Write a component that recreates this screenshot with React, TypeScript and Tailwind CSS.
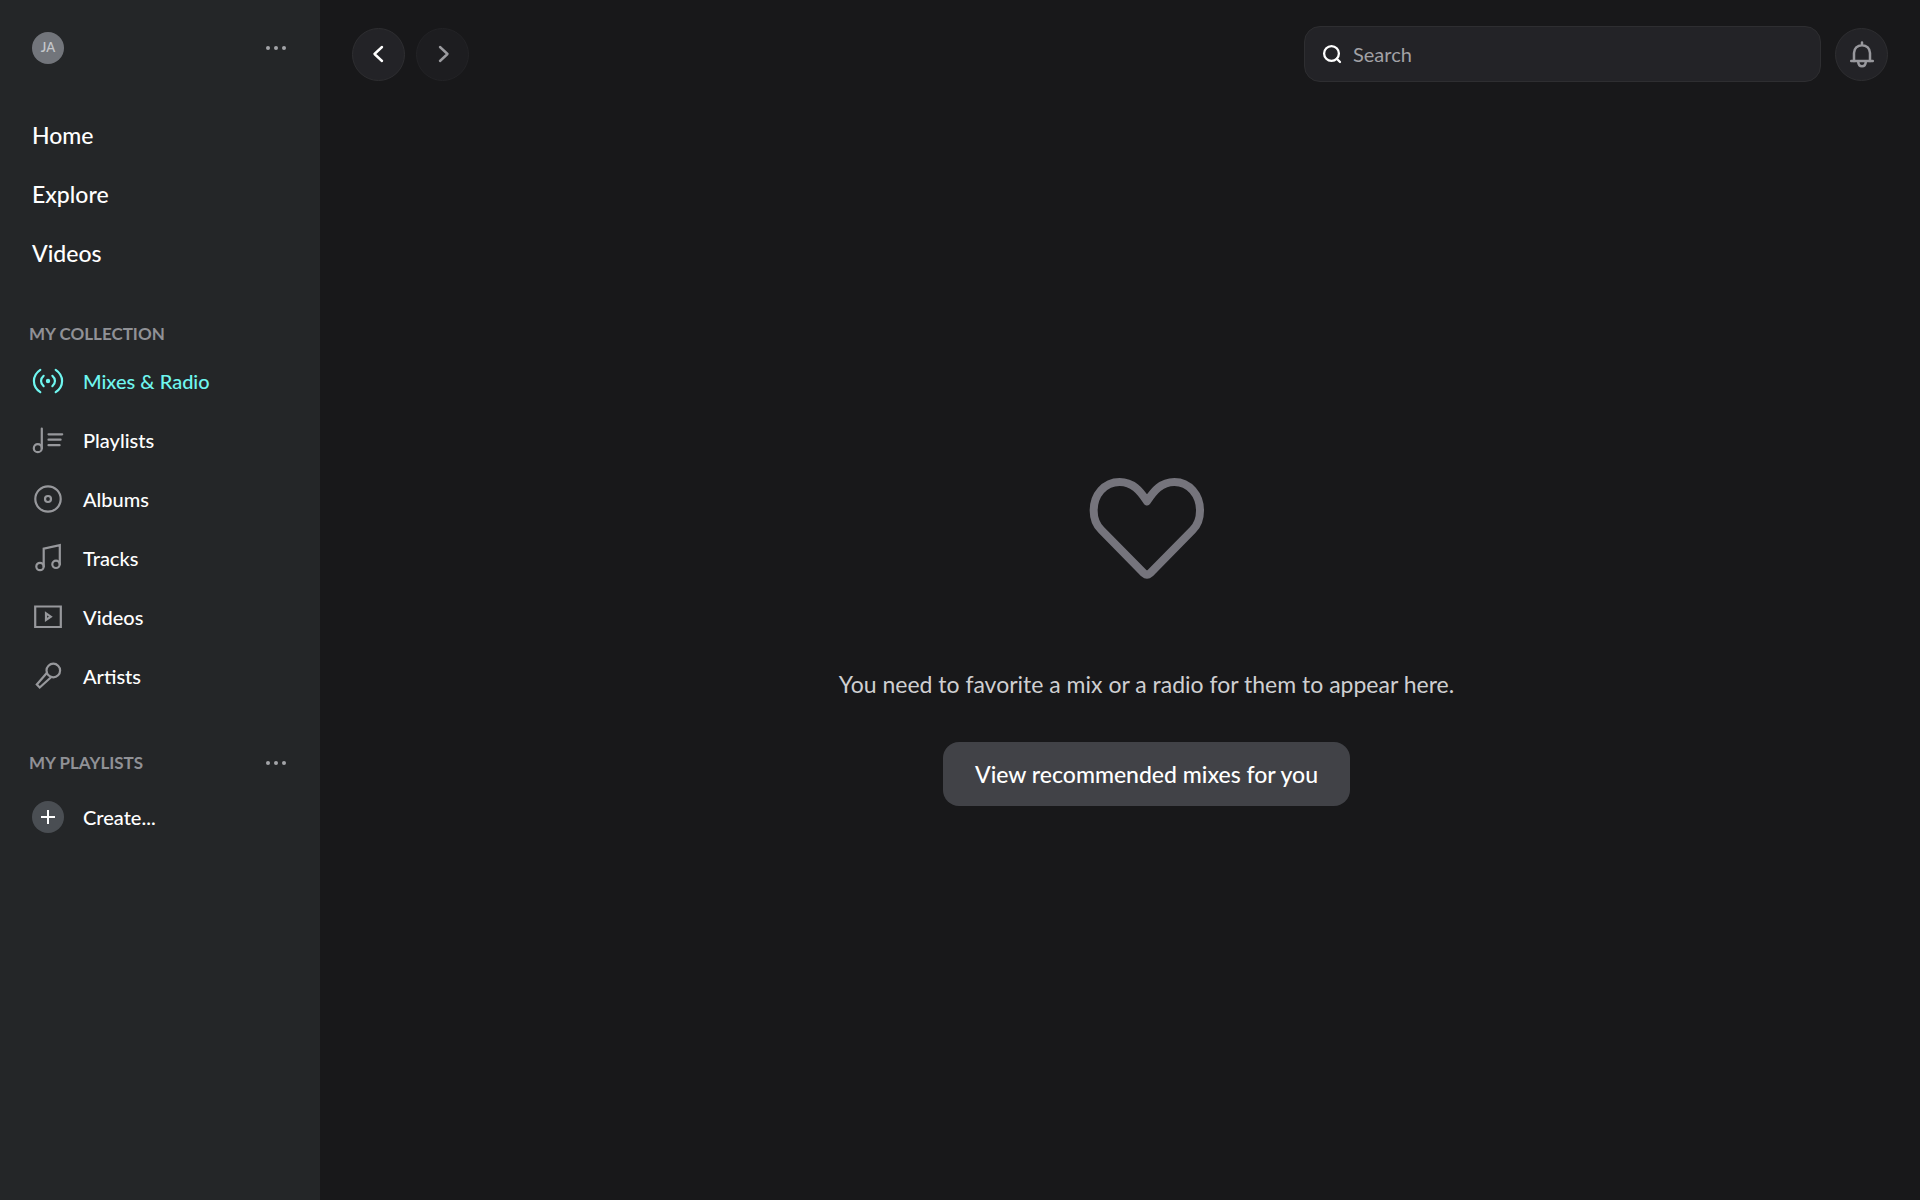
import type { ReactNode } from 'react';
import { clsx } from 'clsx';

const MAIN_NAV = [
  { href: '#home', label: 'Home' },
  { href: '#explore', label: 'Explore' },
  { href: '#videos', label: 'Videos' },
];

const COLLECTION: { href: string; label: string; icon: ReactNode }[] = [
  {
    href: '#mixes',
    label: 'Mixes & Radio',
    icon: (
      <>
        <path d="M8.3 4.8C-.2 10.5 -.2 21.5 8.3 27.2M23.7 4.8C32.2 10.5 32.2 21.5 23.7 27.2" />
        <path d="M11.6 10.8C8.2 13.5 8.2 18.5 11.6 21.2M20.4 10.8C23.8 13.5 23.8 18.5 20.4 21.2" />
        <circle cx="16" cy="16" r="2.2" fill="currentColor" stroke="none" />
      </>
    ),
  },
  {
    href: '#playlists',
    label: 'Playlists',
    icon: (
      <>
        <circle cx="5.8" cy="24.2" r="4" />
        <path d="M9.8 4.5V24.2M16.5 10.3H30.2M16.5 15.7H28.6M16.5 21.2H27.6" />
      </>
    ),
  },
  {
    href: '#albums',
    label: 'Albums',
    icon: (
      <>
        <circle cx="16" cy="16" r="12.7" />
        <circle cx="16" cy="16" r="3" />
      </>
    ),
  },
  {
    href: '#tracks',
    label: 'Tracks',
    icon: (
      <>
        <circle cx="8" cy="24.5" r="3.7" />
        <circle cx="24" cy="22.3" r="3.7" />
        <path d="M11.7 24.5V6.6L27.8 3.2V22.3" strokeLinejoin="miter" />
      </>
    ),
  },
  {
    href: '#my-videos',
    label: 'Videos',
    icon: (
      <>
        <path d="M3.2 5.5H28.8V26H3.2Z" strokeLinejoin="miter" />
        <path d="M14 12.4V19L18.8 15.7Z" strokeLinejoin="miter" />
      </>
    ),
  },
  {
    href: '#artists',
    label: 'Artists',
    icon: (
      <>
        <circle cx="21.3" cy="10.5" r="6.8" />
        <path d="M15 12.7L4.8 24.5L7.7 27.5L19.3 17" strokeLinejoin="miter" />
      </>
    ),
  },
];

function LineIcon({ children }: { children: ReactNode }) {
  return (
    <svg
      viewBox="0 0 32 32"
      className="h-8 w-8 shrink-0"
      fill="none"
      stroke="currentColor"
      strokeWidth="2.2"
      strokeLinecap="round"
      strokeLinejoin="round"
      aria-hidden
    >
      {children}
    </svg>
  );
}

function MoreButton({ label }: { label: string }) {
  return (
    <button type="button" aria-label={label} className="mr-0.5 flex h-8 items-center gap-1 text-[#a3a4a8]">
      <span className="h-1 w-1 rounded-full bg-current" />
      <span className="h-1 w-1 rounded-full bg-current" />
      <span className="h-1 w-1 rounded-full bg-current" />
    </button>
  );
}

function RoundButton({ label, dim = false, children }: { label: string; dim?: boolean; children: ReactNode }) {
  return (
    <button
      type="button"
      aria-label={label}
      disabled={dim}
      className={clsx(
        'flex h-[53px] w-[53px] shrink-0 items-center justify-center rounded-full border',
        dim ? 'border-[#232326] bg-[#1d1d20] text-[#9b9b9f]' : 'border-[#2e2e31] bg-[#232327] text-white'
      )}
    >
      {children}
    </button>
  );
}

function Chevron({ d }: { d: string }) {
  return (
    <svg
      viewBox="0 0 24 24"
      className="h-6 w-6"
      fill="none"
      stroke="currentColor"
      strokeWidth="2.4"
      strokeLinecap="round"
      strokeLinejoin="round"
      aria-hidden
    >
      <path d={d} />
    </svg>
  );
}

function Sidebar() {
  return (
    <aside className="w-80 shrink-0 bg-[#242628] px-8 pt-8">
      <div className="flex items-center justify-between">
        <button
          type="button"
          aria-label="Account"
          className="flex h-8 w-8 items-center justify-center rounded-full bg-[#72757b] text-[13px] font-semibold text-[#c4c6ca]"
        >
          JA
        </button>
        <MoreButton label="Account options" />
      </div>

      <nav aria-label="Main" className="mt-[42px]">
        {MAIN_NAV.map(({ href, label }) => (
          <a key={label} href={href} className="flex h-[59px] items-center text-[23px] font-medium text-white">
            {label}
          </a>
        ))}
      </nav>

      <h2 className="-ml-[3px] mt-[37px] text-[17px] leading-7 font-bold text-[#909196]">MY COLLECTION</h2>
      <nav aria-label="My collection" className="mt-[3px]">
        {COLLECTION.map(({ href, label, icon }, i) => (
          <a key={href} href={href} className="flex h-[59px] items-center gap-[19px]">
            <span className={i === 0 ? 'text-[#6ff6f0]' : 'text-[#97989c]'}>
              <LineIcon>{icon}</LineIcon>
            </span>
            <span className={clsx('text-xl font-medium', i === 0 ? 'text-[#6ff6f0]' : 'text-white')}>{label}</span>
          </a>
        ))}
      </nav>

      <div className="mt-[42px] flex items-center justify-between">
        <h2 className="-ml-[3px] text-[17px] leading-7 font-bold text-[#909196]">MY PLAYLISTS</h2>
        <MoreButton label="Playlist options" />
      </div>
      <button type="button" className="mt-[22px] flex items-center gap-[19px] text-xl font-medium text-white">
        <span className="flex h-8 w-8 items-center justify-center rounded-full bg-[#4a4e53]">
          <svg viewBox="0 0 14 14" className="h-3.5 w-3.5" stroke="currentColor" strokeWidth="2" aria-hidden>
            <path d="M7 0V14M0 7H14" />
          </svg>
        </span>
        Create...
      </button>
    </aside>
  );
}

function Header() {
  return (
    <header className="flex items-center justify-between px-8 pt-[26px]">
      <div className="flex gap-[11px]">
        <RoundButton label="Back">
          <Chevron d="M15 5L7.5 12L15 19" />
        </RoundButton>
        <RoundButton label="Forward" dim>
          <Chevron d="M9 5L16.5 12L9 19" />
        </RoundButton>
      </div>
      <div className="flex items-center gap-3.5">
        <label className="flex h-14 w-[517px] items-center gap-[11px] rounded-2xl border border-[#2e2e31] bg-[#232327] px-[17px]">
          <svg
            viewBox="0 0 20 20"
            className="h-5 w-5 shrink-0 text-white"
            fill="none"
            stroke="currentColor"
            strokeWidth="2.3"
            strokeLinecap="round"
            aria-hidden
          >
            <circle cx="9.5" cy="9.5" r="7.4" />
            <path d="M14.8 14.8L18 18" />
          </svg>
          <input
            type="search"
            aria-label="Search"
            placeholder="Search"
            className="w-full bg-transparent text-xl text-white outline-none placeholder:text-[#a1a1a5]"
          />
        </label>
        <RoundButton label="Notifications">
          <svg
            viewBox="0 0 32 32"
            className="h-8 w-8 text-[#98989d]"
            fill="none"
            stroke="currentColor"
            strokeWidth="2.5"
            strokeLinecap="round"
            strokeLinejoin="round"
            aria-hidden
          >
            <path d="M16 4.5V7M8 23V15C8 10.4 11.4 7.2 16 7.2S24 10.4 24 15V23" />
            <path d="M5.2 23.1H26.8M12.2 23.8C12.4 26.6 14 28.2 16 28.2S19.6 26.6 19.8 23.8" />
          </svg>
        </RoundButton>
      </div>
    </header>
  );
}

export default function App() {
  return (
    <div className="flex min-h-screen bg-[#18181a] font-['Lato','Open_Sans',sans-serif]">
      <Sidebar />
      <div className="flex min-w-0 flex-1 flex-col">
        <Header />
        <main className="flex flex-1 flex-col items-center justify-center pl-[53px]">
          <svg
            viewBox="84 78 354 312"
            className="h-[104px] w-[118px]"
            fill="none"
            stroke="#75747c"
            strokeWidth="24"
            strokeLinejoin="round"
            aria-hidden
          >
            <path d="M261 154C240 122 218 96 179 96C133 96 101 135 101 182C101 210 112 228 124 240L252 370Q261 378 270 370L398 240C410 228 420 210 420 182C420 135 388 96 343 96C304 96 282 122 261 154Z" />
          </svg>
          <p className="mt-[88px] text-[23px] leading-8 text-[#cfcfd1]">
            You need to favorite a mix or a radio for them to appear here.
          </p>
          <button
            type="button"
            className="mt-[42px] h-16 rounded-2xl bg-[#414247] px-8 text-[23px] font-medium text-white"
          >
            View recommended mixes for you
          </button>
        </main>
      </div>
    </div>
  );
}
